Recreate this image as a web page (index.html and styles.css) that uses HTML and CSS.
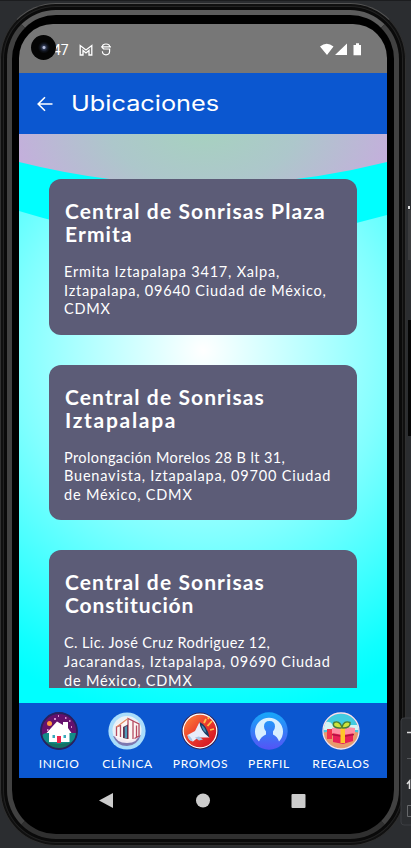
FILE: index.html
```html
<!DOCTYPE html>
<html lang="es">
<head>
<meta charset="utf-8">
<title>Ubicaciones</title>
<link rel="stylesheet" href="styles.css">
</head>
<body>
<div class="desk">
  <div class="phone">
    <div class="bezel">
      <div class="screen">
        <header class="status">
          <span class="clock">47</span>
          <svg class="mail" width="14" height="12" viewBox="0 0 14 12"><path d="M1.200 11V1.500L7 6 12.800 1.500V11H10V6.500L7 9 4 6.500V11Z" fill="none" stroke="#fff" stroke-width="1.300"/></svg>
          <svg class="agent" width="10" height="13" viewBox="0 0 10 13"><path d="M8.600 3.800Q8.600 1 5 1T1.400 3.800Q1.400 6 3.500 6H8.600V8.300Q8.600 11.800 5 11.800T1.400 8.300M0 3.800H10" fill="none" stroke="#fff" stroke-width="1.200"/></svg>
          <svg class="signals" width="43" height="14" viewBox="0 0 43 14"><path d="M0 3.500Q6.700-2 13.500 3.500L7 12Z M15 12L27 .5V12Z M33.500 2H36V.3h3V2h2v10.300h-7.500Z" fill="#fff"/></svg>
          <span class="camera"></span>
        </header>
        <div class="appbar">
          <svg width="16" height="16" viewBox="0 0 16 16"><path d="M15.500 8H1.500M8 1.200L1.200 8 8 14.800" fill="none" stroke="#fff" stroke-width="1.600"/></svg>
          <h1 class="heading">Ubicaciones</h1>
        </div>
        <main class="content">
          <svg class="waves" width="368" height="569" viewBox="19 134 368 569">
            <defs><radialGradient id="sky" gradientUnits="userSpaceOnUse" cx="203" cy="128" r="188" gradientTransform="matrix(1 0 0 .6 0 51)"><stop offset="0" stop-color="#a6d2bf"/><stop offset=".5" stop-color="#adc7cb"/><stop offset="1" stop-color="#c3b0db"/></radialGradient></defs>
            <path d="M19 134H387V215Q203 268 19 211Z" fill="#00ffff"/>
            <path d="M19 134H387V162Q203 208 19 162Z" fill="url(#sky)"/>
          </svg>
          <div class="list">
            <article class="card">
              <h2 class="name">Central de Sonrisas Plaza<br>Ermita</h2>
              <p class="address">Ermita Iztapalapa 3417, Xalpa,<br>Iztapalapa, 09640 Ciudad de México,<br>CDMX</p>
            </article>
            <article class="card">
              <h2 class="name">Central de Sonrisas<br><span class="wide">Iztapalapa</span></h2>
              <p class="address"><span class="tight">Prolongación Morelos 28 B lt 31,</span><br>Buenavista, Iztapalapa, 09700 Ciudad<br>de México, CDMX</p>
            </article>
            <article class="card">
              <h2 class="name">Central de Sonrisas<br><span class="narrow">Constitución</span></h2>
              <p class="address"><span class="tight">C. Lic. José Cruz Rodriguez 12,</span><br>Jacarandas, Iztapalapa, 09690 Ciudad<br>de México, CDMX</p>
            </article>
          </div>
        </main>
        <nav class="tabs">
          <a class="tab tab-home">
            <svg class="icon" viewBox="0 0 38 38"><defs><clipPath id="c1"><circle cx="19" cy="19" r="18"/></clipPath></defs><circle cx="19" cy="19" r="18.500" fill="#26205c"/><g clip-path="url(#c1)"><path d="M0 0H38V38H0Z" fill="#65116d"/><path d="M0 25Q4 20 10 21H38V38H0Z" fill="#118d87"/><path d="M3 29Q18 35 35 29V38H3Z" fill="#147064"/><circle cx="9.500" cy="11.500" r="2.500" fill="#ff983c"/><path d="M6.500 21L17 9.500 23 13V10H28V16L31.500 21H29.500V30H9V21Z" fill="#fff"/><path d="M17 24h4v7h-4Z" fill="#ed234c"/><path d="M12.500 23h2.500v3h-2.500ZM23.500 23h2.500v3h-2.500Z" fill="#3ba9bb"/><path d="M14 7h2M25 6h1.500M29 9h1.500M7 18h1.500M18 4h1M31 15h1" stroke="#f8bcec" stroke-width="1.500"/></g><circle cx="19" cy="19" r="18" fill="none" stroke="#29205d" stroke-width="1.800"/></svg>
            <span class="label">INICIO</span></a>
          <a class="tab tab-clinic">
            <svg class="icon" viewBox="0 0 38 38"><circle cx="19" cy="19" r="18.600" fill="#a9ddfb"/><circle cx="19" cy="18.500" r="14.500" fill="#e9f1f6"/><path d="M5 24Q18 30 33 23Q29 34 19 34T5 24Z" fill="#7d78b0"/><path d="M6 22Q18 29 32 21Q30 31 19 31T6 22Z" fill="#f2e9f2"/><path d="M8 13L19 6 31 11V25L20 29 8 25Z" fill="#fbf6f4"/><path d="M8.500 24V15L12.500 13.500V25M20 27V6.500L25 9V27M25 9L31 12V24L26.500 26.500M28.500 13.500V25" fill="none" stroke="#b54b62" stroke-width="1.300"/><path d="M8.500 15L20 6.500" fill="none" stroke="#e28b64" stroke-width="1.200"/><path d="M15 15L20 12.500V27L15 26Z" fill="#5b3552"/><path d="M16.800 15L19 14V26H16.800Z" fill="#4f9cba"/></svg>
            <span class="label">CLÍNICA</span></a>
          <a class="tab tab-promo">
            <svg class="icon" viewBox="0 0 38 38"><defs><linearGradient id="r" x1="0" y1="0" x2="1" y2="1"><stop stop-color="#ff8e3a"/><stop offset=".45" stop-color="#ed3f2e"/><stop offset="1" stop-color="#cc0920"/></linearGradient></defs><circle cx="19" cy="19" r="18.500" fill="#382250"/><circle cx="19" cy="19" r="16.800" fill="url(#r)" stroke="#fff" stroke-width="1.200"/><path d="M18.500 10Q20 18 28.500 25.500L17 25.500 12 29.500Q7 28 6.500 23L14 19Z" fill="#e7edfb"/><path d="M6.500 23Q10 24 12 29.500Q7 28.500 6.500 23ZM14 25.500L18 24.500 22 27.500 18 28.500Z" fill="#a9c6e7"/><path d="M18.500 10Q26 13 28.500 25.500Q19 19 18.500 10Z" fill="#193c62"/><path d="M20.500 13Q24 15 25.500 21Q21 18 20.500 13Z" fill="#4690b5"/><path d="M23 11L25 7M26.500 14L31 9M29 18L33 17M27 7L28 5" stroke="#ffc24a" stroke-width="1.800"/></svg>
            <span class="label">PROMOS</span></a>
          <a class="tab tab-user">
            <svg class="icon" viewBox="0 0 38 38"><defs><linearGradient id="u" x1="0" y1="0" x2="0" y2="1"><stop stop-color="#16a9fa"/><stop offset="1" stop-color="#5553f5"/></linearGradient></defs><circle cx="19" cy="19" r="18.700" fill="url(#u)"/><path d="M9 29.500A14 14 0 1 1 29 29.500Q27.500 24.500 23 22.500V19.500Q25 17.500 25 14.500Q25 9 19.500 9T14 14.500Q14 17.500 16 19.500V22.500Q11 24.500 9 29.500Z" fill="#d8efff"/></svg>
            <span class="label">PERFIL</span></a>
          <a class="tab tab-gift">
            <svg class="icon" viewBox="0 0 38 38"><defs><clipPath id="c5"><circle cx="19" cy="19" r="17.500"/></clipPath></defs><g clip-path="url(#c5)"><path d="M0 0H38V38H0Z" fill="#42cbe0"/><path d="M0 12Q7 7 11 13H38V18H0Z" fill="#d5f4f2"/><path d="M0 21Q18 15 38 21V38H0Z" fill="#e99a6c"/><path d="M11 17L31 17V29L21 32 11 30Z" fill="#e91f57"/><path d="M10 16L21 14.500 33 16V21L21 23 10 21Z" fill="#ff8fa4"/><path d="M5 17H10V27H5Z" fill="#f3344c"/><path d="M10 22.500L21 24.500 32 22.500" fill="none" stroke="#b31242" stroke-width="1.500"/><path d="M18.500 15h4.500v16h-4.500Z" fill="#ffc629"/><path d="M19.500 16Q9 16 12 10.500Q17 8 20 15Q22 8 28 10.500Q29 16 20.500 16" fill="#cce43c" stroke="#477c35" stroke-width="1.400"/></g><circle cx="19" cy="19" r="18" fill="none" stroke="#fbe3e8" stroke-width="1.300"/></svg>
            <span class="label">REGALOS</span></a>
        </nav>
        <footer class="system">
          <svg width="368" height="46" viewBox="19 778 368 46"><path d="M99 800.500L113 793V808Z" fill="#ccc"/><circle cx="203" cy="800.500" r="7" fill="#ccc"/><rect x="291.500" y="794" width="14" height="14" rx="1" fill="#ccc"/></svg>
        </footer>
      </div>
    </div>
  </div>
  <svg class="side" width="19" height="848" viewBox="392 0 19 848"><path d="M408 206h2v3h-2Z" fill="#ddd"/><path d="M408 210h3v50h-3Z" fill="#3b3c3e"/><path d="M408 320h3v116h-3Z" fill="#050505"/><path d="M411 718H404Q401 718 401 721V822Q401 825 404 825H411" fill="#2b2d30" stroke="#3c3e42"/><path d="M407 732.500h4" stroke="#ddd" stroke-width="1.500"/><path d="M407 758.500h4" stroke="#55575b"/><path d="M407 784l2.500-3v8" stroke="#ddd" stroke-width="1.500" fill="none"/><path d="M411 805.500h-3.500v11h3.500" stroke="#66686b" fill="none"/></svg>
</div>
</body>
</html>
```
FILE: styles.css
```css
* { box-sizing: border-box; }
body { margin: 0; background: #2b2d30; }
.desk { position: relative; width: 411px; height: 848px; overflow: hidden; padding: 2px 0 0; border-top: 1px solid #1c1d1f; font-family: Lato, "Liberation Sans", sans-serif; color: #fff; }
.phone { width: 406px; height: 843px; border-radius: 56px; padding: 6px; background: #0a0a0a; border: 1px solid #303030; border-top-color: #555; box-shadow: inset 0 0 0 2px #101010, inset 0 0 0 3px #222; }
.bezel { width: 392px; height: 829px; border-radius: 49px; border: 5px solid #414141; border-top-color: #5c5c5c; border-bottom-color: #303030; padding: 9px 7px 10px; background: #000; }
.screen { width: 368px; height: 804px; border-radius: 34px; overflow: hidden; background: #000; }
.status { position: relative; display: flex; align-items: center; height: 49px; background: #777; padding: 2px 0 0 36px; }
.clock { font: 14px/16px Roboto, sans-serif; width: 24px; text-indent: -2px; }
.mail { margin-right: 8px; }
.signals { margin-left: auto; margin-right: 24px; }
.camera { position: absolute; left: 12px; top: 11px; width: 25px; height: 25px; border-radius: 50%; background: radial-gradient(circle at 52% 50%, #b9c0dc 0 1px, #303954 2px, #10141d 4px, #050505 6px); }
.appbar { display: flex; align-items: center; gap: 18px; height: 61px; padding-left: 18px; background: #0b57d0; }
.heading { margin: 0; font: 400 21px/28px Inter, sans-serif; transform: scaleX(1.205); transform-origin: 0 50%; }
.content { position: relative; height: 569px; background: radial-gradient(circle at 50% 38%, #fff 0, #80ffff 190px, #10ffff 340px, #00ffff 370px); }
.waves { position: absolute; left: 0; top: 0; }
.list { position: relative; display: flex; flex-direction: column; gap: 30px; height: 554px; overflow: hidden; padding: 45px 30px 0; }
.card { flex: none; height: 155.600px; border-radius: 12px; padding: 20px 15px 0; background: #5c5c77; white-space: nowrap; }
.name { margin: 0; padding-left: 1px; font-size: 21px; font-weight: 700; line-height: 23px; letter-spacing: 1.100px; }
.wide { letter-spacing: 1.700px; }
.narrow { letter-spacing: .85px; }
.address { margin: 18px 0 0; font-size: 14.500px; line-height: 18.700px; letter-spacing: .8px; }
.tight { letter-spacing: .4px; }
.tabs { display: flex; gap: 23px; height: 75px; padding: 9px 0 0 19px; background: #0b57d0; }
.tab { display: flex; flex-direction: column; align-items: center; }
.tab-home { width: 41px; }
.tab-clinic { width: 50px; }
.tab-promo { width: 50px; }
.tab-user { width: 41px; }
.tab-gift { width: 57px; }
.icon { width: 38px; height: 38px; flex: none; }
.label { margin-top: 6px; padding-left: 1px; font-size: 12px; line-height: 15px; letter-spacing: .65px; }
.system { height: 46px; }
.side { position: absolute; right: 0; top: -1px; }
```
